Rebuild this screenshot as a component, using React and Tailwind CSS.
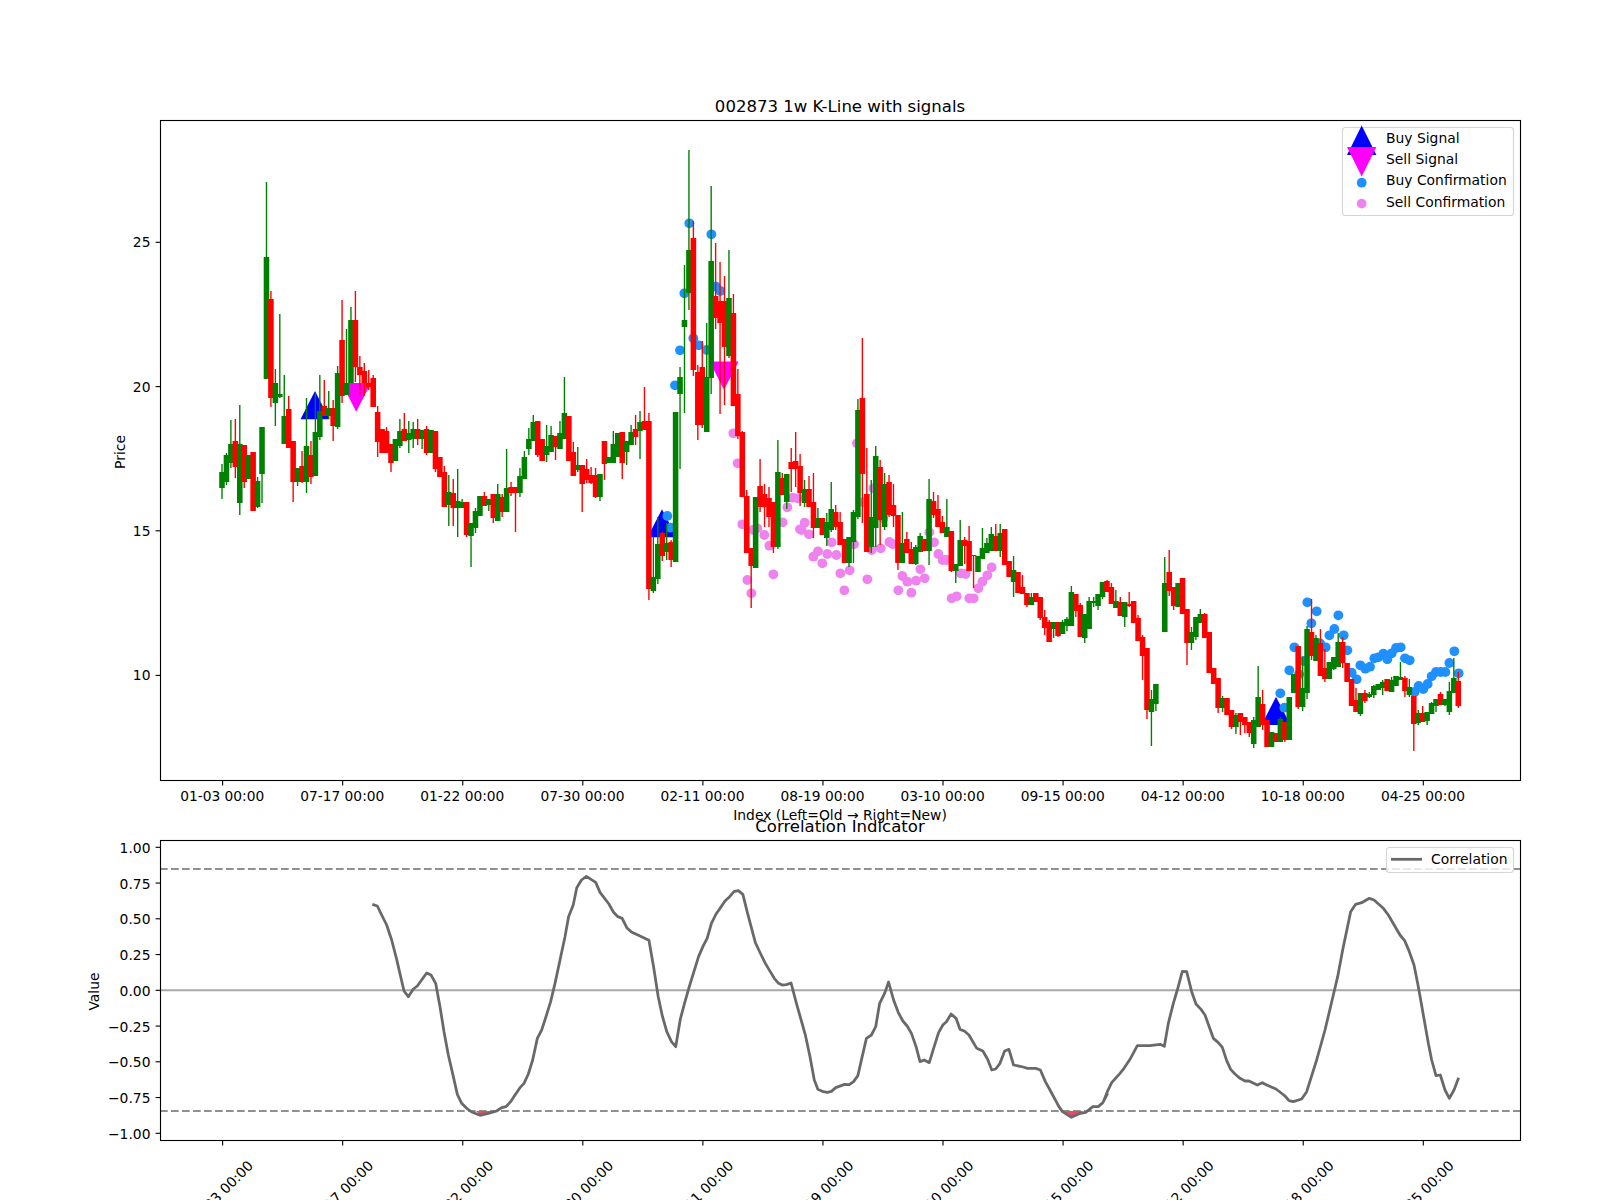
const G = 1;
const R = 0;
const CANDLES = [
[G,464,472,488,499],[G,453,455,482,485],[G,420,444,463,468],[R,419,441,467,478],[G,405,444,503,515],[R,445,445,482,488],[G,455,455,479,479],[R,452,452,511,511],[G,477,481,507,508],[G,427,427,474,503],
[G,182,257,379,379],[R,291,299,398,407],[G,369,383,403,426],[G,314,394,397,398],[G,375,416,444,444],[R,396,409,448,448],[R,441,441,482,502],[G,468,468,482,486],[R,451,466,482,483],[G,398,446,482,493],
[R,441,455,477,484],[G,392,432,476,476],[G,375,411,437,440],[R,380,406,416,416],[G,391,408,416,419],[R,400,408,426,441],[G,366,373,427,429],[R,300,340,396,403],[G,329,383,395,395],[G,307,320,383,383],
[R,291,320,367,382],[R,356,367,375,395],[R,363,371,383,396],[R,370,383,387,390],[R,375,378,407,407],[R,406,412,442,457],[R,429,429,453,453],[R,427,431,453,453],[R,444,444,463,472],[G,439,439,461,461],
[G,419,431,446,448],[R,413,429,441,441],[G,421,433,440,453],[G,422,429,439,448],[R,419,429,439,445],[G,430,430,439,449],[R,426,429,453,455],[G,430,430,453,453],[R,431,431,469,472],[R,457,457,477,477],
[R,466,472,507,507],[G,475,492,505,526],[R,479,493,508,526],[G,469,501,508,537],[G,499,502,508,508],[R,502,502,535,537],[G,523,523,536,567],[G,508,511,528,533],[G,496,496,516,516],[R,492,496,506,506],
[G,499,499,505,511],[R,494,494,518,523],[G,484,494,521,521],[R,494,497,512,517],[G,449,488,512,512],[R,482,487,493,496],[R,487,487,493,532],[G,468,476,493,497],[G,451,457,479,479],[G,428,439,449,455],
[G,415,422,441,441],[R,421,421,455,457],[R,439,439,461,461],[G,425,446,455,462],[G,426,435,452,452],[R,436,436,447,460],[G,421,433,449,449],[G,377,413,439,439],[R,416,416,461,461],[R,442,452,476,476],
[G,447,465,470,472],[R,465,465,484,512],[R,459,469,480,483],[R,467,475,483,484],[R,468,475,497,498],[G,474,474,497,501],[R,441,441,464,480],[G,457,457,463,463],[G,431,444,463,463],[G,433,433,457,457],
[R,432,432,463,479],[G,441,441,452,465],[G,425,432,445,445],[R,415,429,437,445],[G,411,422,431,459],[R,387,421,430,430],[R,413,421,589,600],[G,537,577,591,593],[G,517,544,579,584],[R,532,533,556,561],
[G,523,543,552,560],[R,540,542,560,567],[G,412,412,562,562],[G,367,377,394,469],[G,265,320,327,413],[G,150,250,293,310],[R,221,238,370,376],[R,365,372,425,440],[R,341,367,425,428],[G,323,377,432,432],
[G,186,261,378,394],[R,243,296,318,329],[R,262,301,323,414],[R,276,301,347,405],[G,250,298,356,358],[R,294,313,406,406],[R,369,394,436,439],[R,431,432,497,497],[R,490,496,553,553],[R,548,548,566,608],
[G,497,497,568,568],[R,459,486,507,512],[R,484,494,507,527],[R,487,498,517,527],[R,502,502,547,553],[G,440,472,547,549],[R,473,478,495,495],[G,474,474,502,509],[R,448,462,469,492],[R,432,461,469,487],
[R,454,466,493,506],[G,480,489,503,507],[R,476,489,507,507],[R,473,502,528,538],[G,508,518,528,528],[R,518,518,535,535],[G,513,522,538,546],[G,482,509,530,532],[R,505,512,527,530],[R,512,522,545,545],
[R,539,539,563,563],[G,537,537,563,567],[G,510,512,542,563],[G,399,410,517,519],[R,338,398,474,523],[R,448,494,552,552],[G,480,517,547,553],[G,446,456,528,547],[R,460,467,520,545],[G,473,484,527,530],
[R,475,482,515,517],[R,484,505,516,527],[R,515,515,563,570],[G,512,543,563,563],[R,532,539,553,553],[R,542,549,564,564],[G,545,547,564,565],[G,533,536,552,552],[R,539,539,551,551],[G,479,499,551,565],
[R,492,501,515,518],[R,495,509,527,527],[R,516,522,533,533],[G,499,527,537,537],[R,531,531,571,572],[G,564,564,571,583],[G,520,540,566,566],[R,537,540,546,564],[R,526,541,571,571],[R,555,555,556,588],
[G,556,556,572,572],[G,528,548,559,559],[G,538,543,553,553],[G,527,534,551,551],[R,524,536,551,551],[G,524,533,551,557],[R,529,529,565,565],[R,561,561,577,577],[G,556,570,582,597],[R,572,572,593,593],
[R,575,587,594,594],[R,593,593,605,607],[G,593,597,605,605],[R,593,593,602,602],[R,597,597,618,620],[R,610,617,628,635],[R,620,622,642,642],[G,622,622,629,638],[R,622,622,636,637],[G,620,622,634,634],
[G,617,619,626,631],[G,586,592,626,626],[R,594,594,611,617],[R,603,605,637,637],[G,614,614,638,643],[G,597,601,629,629],[G,597,601,603,607],[G,594,594,606,610],[G,582,582,597,599],[R,580,581,592,592],
[R,583,587,604,604],[G,590,601,608,608],[R,597,602,616,616],[G,602,602,617,627],[R,592,604,606,607],[R,601,601,623,623],[R,615,618,641,641],[R,635,637,656,680],[R,648,648,710,719],[G,690,699,712,746],
[G,684,684,704,711],null,[G,557,583,632,632],[R,550,572,591,596],[R,587,587,606,610],[G,583,583,607,607],[R,578,578,614,614],[R,609,609,643,665],[G,627,632,643,650],[G,617,617,637,640],
[G,609,614,623,623],[R,613,614,638,638],[R,632,632,673,673],[R,668,668,684,684],[R,678,678,708,713],[G,696,698,708,712],[R,698,698,715,715],[R,710,710,727,729],[G,713,715,727,734],[R,713,713,722,735],
[R,717,717,725,733],[R,722,722,733,737],[G,717,720,744,748],[G,666,697,727,727],[R,690,704,725,730],[R,720,720,747,747],[G,732,732,747,747],[R,733,733,742,742],[G,717,719,742,742],[R,722,722,740,742],
[G,697,697,740,740],[G,674,674,693,693],[R,646,646,707,709],[G,657,688,707,711],[G,626,629,693,699],[R,599,632,656,660],[G,635,638,661,661],[R,629,643,676,676],[R,649,668,679,682],[G,662,662,679,679],
[G,657,657,669,670],[G,633,642,667,667],[R,637,642,663,668],[R,663,663,682,682],[R,679,679,706,706],[R,688,700,712,712],[G,693,693,714,716],[R,690,693,701,703],[G,692,694,697,698],[G,685,686,695,698],
[G,684,684,690,690],[G,680,682,688,695],[R,679,679,691,691],[G,677,680,692,692],[G,676,676,686,686],[G,662,677,680,680],[R,676,678,691,697],[G,679,687,695,697],[R,696,696,724,751],[G,710,713,723,725],
[R,706,713,722,722],[G,712,712,721,725],[G,702,703,714,714],[G,699,699,706,712],[R,692,694,705,705],[G,699,699,705,706],[G,682,691,712,715],[G,658,678,693,693],[R,672,681,706,708],
];

const Z = (ox, oy, sx, sy, list) => list.map(([a, b]) => [ox + a / sx, oy + b / sy]);

const BLUE = [
  ...Z(1100, 480, 3, 3, [[622,367],[650,394],[715,406],[634,430],[703,447],[688,466],[731,466],[583,502],[677,502],[660,490],[742,511],[610,543],[568,571],[597,583],[755,578],[770,598],[781,556],[796,566],[810,560],[823,535],[835,532],[850,521],[862,538],[875,520],[888,504],[902,502],[915,535],[929,541],[944,636],[956,618],[970,627],[983,612],[995,589],[1008,576],[1022,576],[1036,576],[1048,549],[1063,514],[1076,580],[541,640],[553,683]]),
  ...Z(640, 140, 3, 3, [[148,250],[214,283],[133,460],[160,595],[176,616],[228,440],[241,453],[200,630],[120,631],[105,736],[181,762]]),
  ...Z(500, 380, 3, 3, [[502,408],[512,443],[600,40]]),
];

const PINK = [
  ...Z(500, 380, 3, 3, [[700,160],[713,250],[727,433],[772,445],[793,465],[808,497],[820,583],[742,600],[754,640],[862,382],[878,353],[848,427],[900,448],[760,450],[893,355]]),
  ...Z(800, 340, 3, 3, [[14,548],[5,570],[27,583],[54,634],[40,650],[67,670],[82,642],[95,607],[109,645],[121,700],[133,751],[149,691],[162,613],[202,718],[171,310],[190,487],[215,630],[242,625],[250,535],[268,606],[278,612],[295,751],[307,708],[322,725],[334,758],[348,722],[361,688],[374,715],[388,577],[402,607],[415,642],[428,660],[440,660],[455,775],[470,769],[482,700],[497,702],[508,775],[521,775],[535,745],[547,725],[562,706],[575,682],[220,445]]),
];

const CORR = [
  ...Z(60, 760, 3, 3, [[937,433],[952,438],[965,465],[980,495],[995,540],[1010,598],[1032,693],[1045,710],[1060,687],[1072,678],[1100,639],[1113,645],[1127,670],[1140,740],[1152,815],[1165,885],[1180,950],[1192,1003],[1205,1030],[1220,1045],[1235,1056],[1260,1066],[1285,1060],[1310,1053],[1325,1043],[1338,1040],[1352,1025],[1365,1005],[1380,983],[1392,970],[1405,942],[1418,900],[1432,835],[1445,810],[1458,770],[1472,725],[1485,670]]),
  ...Z(550, 850, 2.8, 3, [[30,320],[42,260],[52,200],[65,165],[75,113],[88,90],[102,79],[128,97],[140,127],[165,162],[178,187],[190,200],[202,205],[215,233],[228,246],[240,252],[252,258],[277,271],[290,350],[303,440],[315,500],[327,545],[340,575],[352,590],[365,507],[378,455],[390,410],[403,365],[416,320],[428,290],[440,265],[452,220],[465,192],[478,172],[490,153],[503,140],[515,125],[527,122],[540,133],[552,185],[575,278],[590,312],[603,340],[615,362],[628,385],[640,400],[650,405],[662,404],[675,399],[690,460],[715,555],[728,620],[740,690],[750,718],[765,725],[777,727],[788,724],[800,713],[825,703],[838,704],[850,695],[862,677],[873,625],[886,565],[900,555],[912,530],[923,460],[937,430],[948,396],[962,450],[975,487],[988,513],[1000,528],[1012,550],[1025,590],[1036,635],[1048,630],[1062,638],[1075,592],[1088,548],[1100,525],[1110,515],[1123,492],[1137,505],[1148,538],[1160,543],[1173,555],[1195,595],[1212,603],[1225,627],[1237,660],[1248,657],[1260,640],[1273,603],[1285,598],[1298,645],[1325,651],[1337,655],[1360,655],[1373,660],[1387,695],[1400,720],[1425,770],[1435,785],[1460,802],[1485,790],[1500,787],[1520,770],[1535,770],[1548,758],[1560,733]]),
  ...Z(1100, 820, 3, 3, [[10,845],[22,815],[35,788],[60,760],[72,745],[90,718],[112,677],[135,677],[150,677],[180,673],[193,679],[205,610],[220,550],[232,510],[247,454],[260,455],[275,515],[288,552],[303,568],[315,585],[340,655],[355,668],[367,682],[380,722],[392,748],[405,762],[420,775],[435,783],[447,783],[472,795],[487,788],[500,795],[528,807],[555,828],[567,842],[580,845],[605,837],[620,815],[650,720],[675,630],[700,525],[713,470],[728,390],[752,275],[767,253],[785,248],[808,235],[822,240],[850,265],[865,285],[900,345],[914,362],[928,395],[942,435],[955,500],[970,585],[985,670],[995,720],[1008,767],[1021,765],[1035,810],[1048,835],[1062,810],[1076,773]]),
];

const X0 = 222;
const STEP = 4.447;
const TICKS = ["01-03", "07-17", "01-22", "07-30", "02-11", "08-19", "03-10", "09-15", "04-12", "10-18", "04-25"].map(
  (d, i) => ({ label: `${d} 00:00`, x: 222.6 + i * 120.07 })
);
const PRICE = [["25", 242.3], ["20", 386.6], ["15", 530.8], ["10", 675.4]];
const VALUE = ["1.00", "0.75", "0.50", "0.25", "0.00", "−0.25", "−0.50", "−0.75", "−1.00"].map((t, i) => [t, 847.3 + i * 35.75]);
const tri = (pts) => pts.map((p) => p.join(",")).join(" ");

function Candles() {
  return CANDLES.map((c, i) => {
    if (!c) return null;
    const x = X0 + STEP * i;
    const col = c[0] === G ? "#008000" : "#ff0000";
    return (
      <g key={i} stroke={col}>
        <line x1={x} x2={x} y1={c[1]} y2={c[4]} strokeWidth="1.39" />
        <line x1={x} x2={x} y1={c[2]} y2={c[3]} strokeWidth="5.56" />
      </g>
    );
  });
}

export default function App() {
  return (
    <div className="w-[1600px] h-[1200px] bg-white flex flex-col overflow-hidden font-['DejaVu_Sans',sans-serif] text-[13.89px] text-black">
      <svg className="block w-[1600px] h-[820px] shrink-0 overflow-visible" viewBox="0 0 1600 820">
        <text x="840" y="112" textAnchor="middle" className="text-[16.55px]">002873 1w K-Line with signals</text>
        <polygon points={tri([[315, 391], [300.5, 419.3], [329.5, 419.3]])} fill="#0000ff" />
        <polygon points={tri([[662, 509.3], [647.5, 537.3], [676.5, 537.3]])} fill="#0000ff" />
        <polygon points={tri([[1276, 696.7], [1261.5, 725], [1290.5, 725]])} fill="#0000ff" />
        <polygon points={tri([[341.5, 383], [371, 383], [356.2, 411.7]])} fill="#ff00ff" />
        <polygon points={tri([[709.5, 361.5], [738.5, 361.5], [724, 389.8]])} fill="#ff00ff" />
        {BLUE.map(([x, y], i) => <circle key={i} cx={x} cy={y} r="4.9" fill="#1e90ff" />)}
        {PINK.map(([x, y], i) => <circle key={i} cx={x} cy={y} r="4.9" fill="#ee82ee" />)}
        <Candles />
        <rect x="160.5" y="120.5" width="1360" height="660" fill="none" stroke="#000" strokeWidth="1.11" />
        {PRICE.map(([t, y]) => (
          <g key={t}>
            <line x1="155.6" x2="160" y1={y} y2={y} stroke="#000" strokeWidth="1.11" />
            <text x="150.5" y={y + 5} textAnchor="end">{t}</text>
          </g>
        ))}
        {TICKS.map((t) => (
          <g key={t.label}>
            <line x1={t.x} x2={t.x} y1="781" y2="785.4" stroke="#000" strokeWidth="1.11" />
            <text x={t.x - 0.4} y="801" textAnchor="middle" className="text-[13.78px]">{t.label}</text>
          </g>
        ))}
        <text x="840" y="820" textAnchor="middle">Index (Left=Old → Right=New)</text>
        <text transform="translate(124.5 452) rotate(-90)" textAnchor="middle">Price</text>
        <rect x="1342.5" y="127.5" width="171" height="88" rx="3" fill="#ffffff" fillOpacity="0.8" stroke="#d5d5d5" strokeWidth="1.11" />
        <polygon points={tri([[1361.7, 125.5], [1347, 155], [1376.4, 155]])} fill="#0000ff" />
        <polygon points={tri([[1347, 147], [1376.4, 147], [1361.7, 176.5]])} fill="#ff00ff" />
        <circle cx="1361.7" cy="182.7" r="4.9" fill="#1e90ff" />
        <circle cx="1361.7" cy="203.6" r="4.9" fill="#ee82ee" />
        <text x="1386" y="142.5">Buy Signal</text>
        <text x="1386" y="163.5">Sell Signal</text>
        <text x="1386" y="185">Buy Confirmation</text>
        <text x="1386" y="206.5">Sell Confirmation</text>
      </svg>
      <svg className="block w-[1600px] h-[380px] shrink-0 overflow-visible" viewBox="0 820 1600 380">
        <text x="840" y="832" textAnchor="middle" className="text-[16.55px]">Correlation Indicator</text>
        <line x1="160" x2="1520" y1="990.3" y2="990.3" stroke="#a9a9a9" strokeWidth="2" />
        <line x1="160" x2="1520" y1="869" y2="869" stroke="#909090" strokeWidth="2.08" strokeDasharray="7.7 3.3" />
        <line x1="160" x2="1520" y1="1111" y2="1111" stroke="#909090" strokeWidth="2.08" strokeDasharray="7.7 3.3" />
        <polygon points="476,1111 480,1115 490,1113 492,1111" fill="#e8486a" />
        <polygon points="1062,1111 1071,1117 1082,1112 1083,1111" fill="#e8486a" />
        <polyline points={CORR.map((p) => p.join(",")).join(" ")} fill="none" stroke="#696969" strokeWidth="2.78" strokeLinejoin="round" />
        <rect x="160.5" y="840.5" width="1360" height="300" fill="none" stroke="#000" strokeWidth="1.11" />
        {VALUE.map(([t, y]) => (
          <g key={t}>
            <line x1="155.6" x2="160" y1={y} y2={y} stroke="#000" strokeWidth="1.11" />
            <text x="150.5" y={y + 5.5} textAnchor="end">{t}</text>
          </g>
        ))}
        {TICKS.map((t) => (
          <g key={t.label}>
            <line x1={t.x} x2={t.x} y1="1141" y2="1145.4" stroke="#000" strokeWidth="1.11" />
            <text transform={`translate(${t.x - 2} 1193) rotate(-45)`} textAnchor="middle" dominantBaseline="central">{t.label}</text>
          </g>
        ))}
        <text transform="translate(99 991.5) rotate(-90)" textAnchor="middle">Value</text>
        <rect x="1386.5" y="847.5" width="127" height="25" rx="3" fill="#ffffff" fillOpacity="0.8" stroke="#d5d5d5" strokeWidth="1.11" />
        <line x1="1391" x2="1422" y1="859.3" y2="859.3" stroke="#696969" strokeWidth="2.78" />
        <text x="1431" y="864">Correlation</text>
      </svg>
    </div>
  );
}
